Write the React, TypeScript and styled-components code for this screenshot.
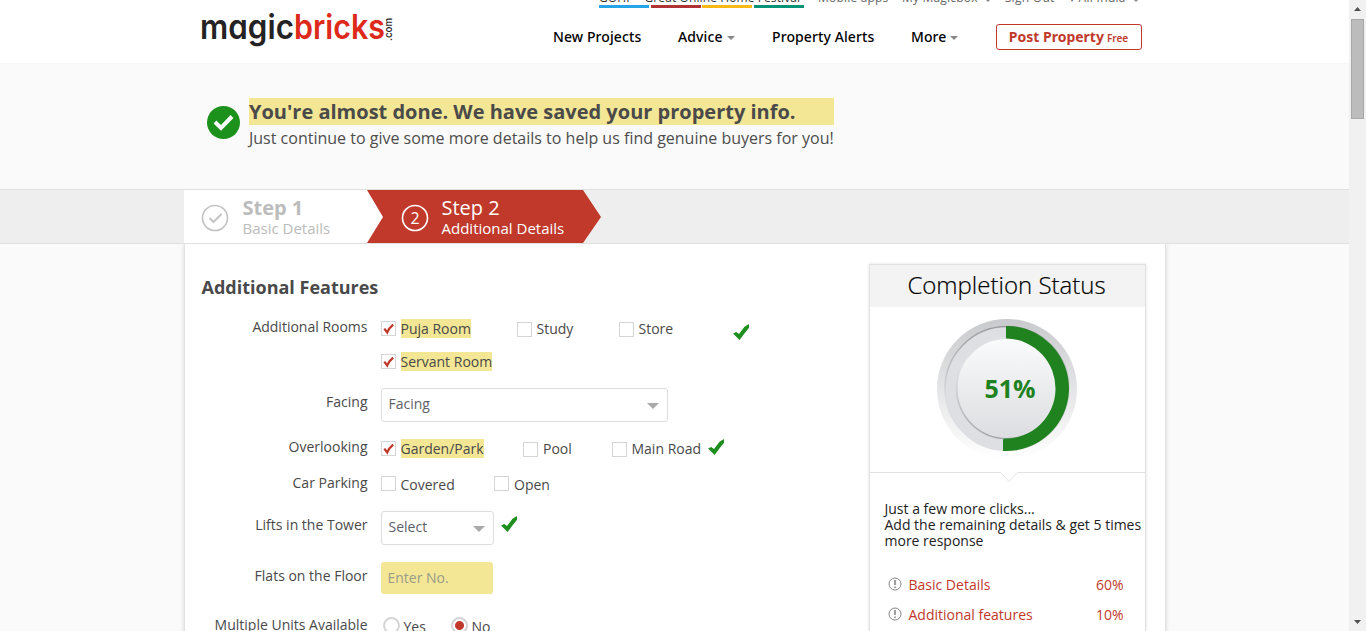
import React from "react";
import styled, { createGlobalStyle } from "styled-components";

const GlobalStyle = createGlobalStyle`
  * { box-sizing: border-box; }
  body { margin: 0; background: #fafafa; color: #494949; font: 14px/19px "Open Sans", "Noto Sans", sans-serif; overflow: hidden; }
`;

const Window = styled.div`display: flex; height: 631px; width: 1366px; overflow: hidden;`;
const Page = styled.div`flex: 1; min-width: 0; height: 631px; overflow: hidden;`;

const Header = styled.header`
  height: 64px; background: #fff; padding: 0 206px 0 201px;
  display: flex; justify-content: space-between; border-bottom: 1px solid #f7f7f7;
`;
const Logo = styled.svg`width: 196px; height: 46px; margin-top: 6px; font-feature-settings: "cv11" 1;`;
const HeaderRight = styled.div`width: 590px; display: flex; flex-direction: column;`;
const Utility = styled.div`
  display: flex; height: 8px; padding-left: 46px; font-size: 12px; line-height: 18px; color: #555; width: 590px;
`;
const UtilityItem = styled.span<{ $w: number; $ls?: number }>`
  width: ${p => p.$w}px; margin-top: -11px; white-space: pre; letter-spacing: ${p => p.$ls ?? 0}px; color: #666;
`;
const Festival = styled.div`width: 205px; margin-right: 14px; display: flex; flex-direction: column; color: #333;`;
const FestivalText = styled.div`height: 5px; display: flex; align-items: flex-end; gap: 12px; white-space: pre; letter-spacing: 0.1px;
  span { display: block; height: 16px; line-height: 18px; }`;
const Stripes = styled.div`display: flex; gap: 1.7px; height: 3px;`;
const Stripe = styled.i<{ $c: string }>`width: 50px; height: 3px; background: ${p => p.$c};`;
const Nav = styled.nav`
  display: flex; height: 26px; margin-top: 16px; align-items: center; font: 500 14px/20px "Noto Sans", "Open Sans", sans-serif; color: #000;
`;
const NavItem = styled.a<{ $w: number; $ls?: number }>`
  width: ${p => p.$w}px; white-space: nowrap; letter-spacing: ${p => p.$ls ?? 0}px; display: flex; align-items: center;
`;
const Caret = styled.i<{ $s?: number; $c?: string }>`
  border: ${p => p.$s ?? 4}px solid transparent; border-bottom: 0; border-top-color: ${p => p.$c ?? "#888"};
  display: inline-block; margin: 2px 0 0 4px;
`;
const PostButton = styled.button`
  width: 146px; height: 26px; border: 1px solid #c0392b; border-radius: 3px; background: #fff; color: #c0392b; padding: 2px 1px 0 0;
  font: bold 14px/20px "Noto Sans", sans-serif; display: flex; align-items: baseline; justify-content: center; gap: 3px; white-space: nowrap;
  small { font-size: 10px; font-weight: 600; }
`;

const Banner = styled.section`height: 125px; padding: 34px 0 0 207px; display: flex; gap: 9px;`;
const BannerIcon = styled.svg`width: 33px; height: 33px; margin-top: 8px;`;
const BannerTitle = styled.h1`margin: 0; width: 585px; height: 27px; background: #f3e795; font: bold 20px/27px "Open Sans", sans-serif; color: #4a4a4a; white-space: nowrap;`;
const BannerText = styled.p`margin: 2px 0 0; font-size: 16px; line-height: 22px; white-space: nowrap; color: #4d4d4d;`;

const StepBar = styled.div`height: 55px; background: #eee; border: solid #e0e0e0; border-width: 1px 0; padding-left: 184px; display: flex;`;
const Step = styled.div<{ $active?: boolean }>`
  height: 53px; display: flex; color: ${p => (p.$active ? "#fff" : "#bcbcbc")}; background: ${p => (p.$active ? "#c0392b" : "#fff")};
  width: ${p => (p.$active ? 234 : 200)}px; padding-left: ${p => (p.$active ? 34 : 17)}px; gap: ${p => (p.$active ? 12.5 : 13.5)}px;
  margin-left: ${p => (p.$active ? -17 : 0)}px;
  clip-path: ${p => (p.$active ? "polygon(0 0, 216px 0, 234px 27px, 216px 53px, 0 53px, 16px 27px)" : "none")};
  svg { width: 28px; height: 28px; margin-top: 14px; flex: none; }
`;
const StepText = styled.div`white-space: nowrap; font-size: 15px; line-height: 19px; padding-top: 6px;`;
const StepName = styled.div<{ $bold?: boolean }>`font-size: 20px; line-height: 24px; margin-bottom: -1px; font-weight: ${p => (p.$bold ? 700 : 400)};`;

const Main = styled.main`
  margin-left: 184px; width: 982px; height: 400px; background: #fff; border: solid #e2e2e2; border-width: 0 1px; box-shadow: 0 0 4px rgba(0,0,0,.15);
  display: flex; clip-path: inset(0 -6px 0 -6px);
`;
const Form = styled.form`width: 684px; padding: 31px 0 0 16px; flex: none;`;
const FormTitle = styled.h2`margin: 0 0 18px 0.5px; font: bold 18px/24px "Open Sans", sans-serif; color: #494949;`;
const Row = styled.div<{ $h: number }>`display: flex; height: ${p => p.$h}px; gap: 13.5px;`;
const Label = styled.label`width: 166.5px; text-align: right; line-height: 20px; white-space: nowrap;`;
const Controls = styled.div<{ $up?: boolean }>`display: flex; flex-wrap: wrap; align-content: flex-start; width: 410px; margin-top: ${p => (p.$up ? -4 : 2)}px;`;
const Choice = styled.div<{ $w: number; $gap?: number }>`display: flex; width: ${p => p.$w}px; height: 19px; margin-bottom: 14px; gap: ${p => p.$gap ?? 4.5}px; flex: none; white-space: nowrap;`;
const Box = styled.i<{ $y: number }>`width: 15px; height: 15px; border: 1px solid #d5d5d5; background: #fff; margin-top: ${p => p.$y}px; display: flex; flex: none;`;
const ChoiceText = styled.span<{ $on?: boolean }>`background: ${p => (p.$on ? "#f3e795" : "transparent")}; height: 19px;`;
const Select = styled.div<{ $w: number }>`
  width: ${p => p.$w}px; height: 34px; border: 1px solid #ddd; border-radius: 3px; display: flex; align-items: flex-start; justify-content: space-between;
  padding: 5px 8px 0 6.5px; color: #5e6267;
  i { margin-top: 9px; }
`;
const Input = styled.div`width: 112px; height: 32px; border-radius: 3px; background: #f3e795; color: #999a8c; padding: 6px 6.5px;`;
const Tick = styled.svg<{ $x?: number; $y?: number }>`width: 17px; height: 16px; margin: ${p => p.$y ?? 0}px 0 0 ${p => p.$x ?? 0}px; flex: none;`;
const Radio = styled.i<{ $on?: boolean }>`
  width: 17px; height: 17px; margin-left: 2px; border: 2px solid #d5d5d5; border-radius: 50%; flex: none;
  background: ${p => (p.$on ? "radial-gradient(circle, #c0392b 4px, #fff 5px)" : "#fff")};
`;

const Card = styled.aside`width: 277px; height: 400px; margin-top: 20px; border: 1px solid #e2e2e2; box-shadow: 0 0 3px rgba(0,0,0,.12);`;
const CardTitle = styled.h3`margin: 0; height: 42px; padding-right: 2px; background: #f3f3f3; font: 300 24px/40px "Open Sans", sans-serif; color: #000; -webkit-text-stroke: 0.2px #000; text-align: center; white-space: nowrap;`;
const Gauge = styled.svg`display: block; width: 275px; height: 175px;`;
const CardText = styled.p`margin: 19px 0 0 14.5px; line-height: 16px; color: #222; white-space: nowrap;`;
const List = styled.ul`list-style: none; margin: 26px 21.5px 0 17.5px; padding: 0;`;
const Item = styled.li`display: flex; height: 30px; line-height: 20px; color: #c0392b; gap: 7px; svg { width: 14px; height: 14px; margin-top: 2px; } b { font-weight: 400; margin-left: auto; }`;

const Scrollbar = styled.div`width: 17px; background: #f1f1f1; display: flex; flex-direction: column; align-items: center; svg { width: 17px; height: 17px; }`;
const Thumb = styled.div`width: 13px; height: 100px; margin: 2px 0 auto; background: #bcbcbc; border: 1px solid #a8a8a8;`;

const GreenTick = ({ x, y }: { x?: number; y?: number }) => (
  <Tick $x={x} $y={y} viewBox="0 0 17 16"><path d="M0 9.5 3.2 8 6 10 11.5 2.8 16 0V3.8L11.8 9 6.6 16Z" fill="#1e8e1e" /></Tick>
);

type CheckProps = { label: string; w: number; on?: boolean; y?: number; gap?: number };
const Check = ({ label, w, on, y = 2, gap }: CheckProps) => (
  <Choice $w={w} $gap={gap}>
    <Box $y={y}>{on && <svg width="13" height="13" viewBox="0 0 13 13"><path d="M2.3 6.6 5.2 10.4Q7 6 11.2 2.6" fill="none" stroke="#c0392b" strokeWidth="2.3" /></svg>}</Box>
    <ChoiceText $on={on}>{label}</ChoiceText>
  </Choice>
);

const Status = ({ label, value }: { label: string; value: string }) => (
  <Item>
    <svg viewBox="0 0 14 14"><circle cx="7" cy="7" r="6" fill="none" stroke="#888" /><path d="M7 3v5M7 9.5V11" stroke="#777" strokeWidth="1.4" /></svg>
    <span>{label}</span><b>{value}</b>
  </Item>
);

export default function App() {
  return (
    <Window>
      <GlobalStyle />
      <Page>
        <Header>
          <Logo viewBox="0 0 196 46" fontFamily="Inter, Lato, sans-serif">
            <text x="-1" y="33" fontSize="34" fontWeight="600" fill="#252223" textLength="94" lengthAdjust="spacingAndGlyphs">magic</text>
            <text x="93" y="33" fontSize="34" fontWeight="600" fill="#de2a1b" textLength="91" lengthAdjust="spacingAndGlyphs">bricks</text>
            <text transform="translate(191 35) rotate(-90)" fontSize="10.5" fontWeight="500" fill="#252223" textLength="23" lengthAdjust="spacingAndGlyphs">.com</text>
          </Logo>
          <HeaderRight>
            <Utility>
              <Festival>
                <FestivalText><span>GOHF</span><span>Great Online Home Festival</span></FestivalText>
                <Stripes><Stripe $c="#25a5e8" /><Stripe $c="#b03436" /><Stripe $c="#fbb917" /><Stripe $c="#069478" /></Stripes>
              </Festival>
              <UtilityItem $w={85} $ls={0.2}>Mobile apps</UtilityItem>
              <UtilityItem $w={104} $ls={0.2}>My Magicbox <Caret $s={3} /></UtilityItem>
              <UtilityItem $w={65} $ls={0.3}>Sign Out</UtilityItem>
              <UtilityItem $w={75} $ls={0.3}>▾ All India <Caret $s={3} /></UtilityItem>
            </Utility>
            <Nav>
              <NavItem $w={125} $ls={0.1}>New Projects</NavItem>
              <NavItem $w={94} $ls={0.1}>Advice <Caret /></NavItem>
              <NavItem $w={139} $ls={0.1}>Property Alerts</NavItem>
              <NavItem $w={85} $ls={0.1}>More <Caret /></NavItem>
              <PostButton>Post Property<small>Free</small></PostButton>
            </Nav>
          </HeaderRight>
        </Header>
        <Banner>
          <BannerIcon viewBox="0 0 33 33"><circle cx="16.5" cy="16.5" r="16.5" fill="#1c911c" /><path d="m8 16 6 6L25 10.500" fill="none" stroke="#fff" strokeWidth="4" /></BannerIcon>
          <div>
            <BannerTitle>You're almost done. We have saved your property info.</BannerTitle>
            <BannerText>Just continue to give some more details to help us find genuine buyers for you!</BannerText>
          </div>
        </Banner>
        <StepBar>
          <Step>
            <svg viewBox="0 0 28 28" fill="none" stroke="#c3c3c3"><circle cx="14" cy="14" r="12.500" strokeWidth="1.6" /><path d="m8.500 14 4 4 8-8" strokeWidth="2" /></svg>
            <StepText><StepName $bold>Step 1</StepName>Basic Details</StepText>
          </Step>
          <Step $active>
            <svg viewBox="0 0 28 28"><circle cx="14" cy="14" r="12.500" fill="none" stroke="#fff" strokeWidth="1.6" /><text x="14" y="19.500" fontSize="16" fill="#fff" textAnchor="middle">2</text></svg>
            <StepText><StepName>Step 2</StepName>Additional Details</StepText>
          </Step>
        </StepBar>
        <Main>
          <Form>
            <FormTitle>Additional Features</FormTitle>
            <Row $h={75}><Label>Additional Rooms</Label>
              <Controls><Check label="Puja Room" w={136} on /><Check label="Study" w={102} y={3} /><Check label="Store" w={114} y={3} /><GreenTick y={5} /><Check label="Servant Room" w={136} on /></Controls>
            </Row>
            <Row $h={45}><Label>Facing</Label><Controls $up><Select $w={287}>Facing<Caret $s={6} $c="#aaa" /></Select></Controls></Row>
            <Row $h={36}><Label>Overlooking</Label>
              <Controls><Check label="Garden/Park" w={142} on /><Check label="Pool" w={89} y={3} gap={5} /><Check label="Main Road" w={96} y={3} /><GreenTick /></Controls>
            </Row>
            <Row $h={42}><Label>Car Parking</Label><Controls><Check label="Covered" w={113} y={1} /><Check label="Open" w={100} y={1} gap={5} /></Controls></Row>
            <Row $h={51}><Label>Lifts in the Tower</Label><Controls $up><Select $w={113}>Select<Caret $s={6} $c="#aaa" /></Select><GreenTick x={7} y={5} /></Controls></Row>
            <Row $h={49}><Label>Flats on the Floor</Label><Controls $up><Input>Enter No.</Input></Controls></Row>
            <Row $h={30}><Label>Multiple Units Available</Label>
              <Controls><Choice $w={68} $gap={3.5}><Radio />Yes</Choice><Choice $w={80} $gap={3.5}><Radio $on />No</Choice></Controls>
            </Row>
          </Form>
          <Card>
            <CardTitle>Completion Status</CardTitle>
            <Gauge viewBox="0 0 275 175">
              <defs>
                <linearGradient id="rim" x2="0" y2="1"><stop stopColor="#c9cacd" /><stop offset="1" stopColor="#fff" /></linearGradient>
                <linearGradient id="disc" x2="0" y2="1"><stop stopColor="#fafbfc" /><stop offset="1" stopColor="#dcdde0" /></linearGradient>
                <linearGradient id="edge" x2="0" y2="1"><stop stopColor="#9b9ca0" /><stop offset=".6" stopColor="#dddee2" /></linearGradient>
                <linearGradient id="under" x2="0" y2="1"><stop offset=".3" stopColor="#e0e1e5" /><stop offset="1" stopColor="#a5a6ab" /></linearGradient>
              </defs>
              <circle cx="137" cy="82" r="70" fill="url(#rim)" />
              <circle cx="137" cy="81.500" r="62" fill="#dedfe3" stroke="url(#edge)" strokeWidth="1.500" />
              <circle cx="137" cy="81.500" r="50.200" fill="url(#disc)" stroke="url(#under)" strokeWidth="1.600" />
              <path d="M136 19H137A62.500 62.500 0 1 1 133 143.900V132.300H134V131.500A50 50 0 1 0 137 31.500H136Z" fill="#1f821f" />
              <text x="140" y="91" textAnchor="middle" fontSize="25" fontWeight="700" fill="#1f821f">51%</text>
              <path d="M0 165.500H130.500L139 174.500 147.500 165.500H275" fill="none" stroke="#e2e2e2" />
            </Gauge>
            <CardText>Just a few more clicks...<br />Add the remaining details &amp; get 5 times<br />more response</CardText>
            <List><Status label="Basic Details" value="60%" /><Status label="Additional features" value="10%" /></List>
          </Card>
        </Main>
      </Page>
      <Scrollbar>
        <svg viewBox="0 0 17 17"><path d="M5 11h7L8.500 7Z" fill="#505050" /></svg>
        <Thumb />
        <svg viewBox="0 0 17 17"><path d="M5 6h7L8.500 10Z" fill="#505050" /></svg>
      </Scrollbar>
    </Window>
  );
}
